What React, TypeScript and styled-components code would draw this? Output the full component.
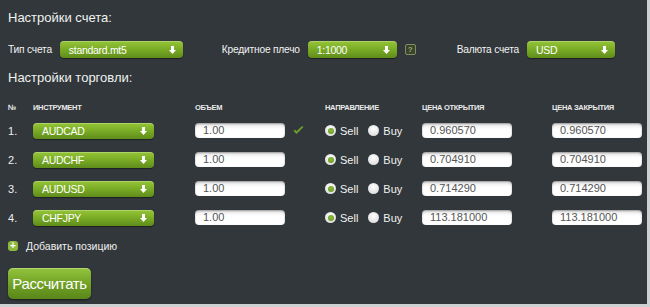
import React from "react";
import styled, { createGlobalStyle } from "styled-components";

const GlobalStyle = createGlobalStyle`
    html, body {
        margin: 0;
        padding: 0;
        background: #cdd1d1;
    }
    body {
        font-family: "Liberation Sans", Arial, sans-serif;
    }
`;

const Panel = styled.div`
    width: 647px;
    height: 304px;
    box-sizing: border-box;
    background: #31373a;
    padding: 10px 0 0 8px;
    color: #eef0ee;
    overflow: hidden;
`;

const Title = styled.h2`
    margin: 0;
    font-size: 13px;
    font-weight: normal;
    line-height: 16px;
    color: #f0f2f0;
`;

const AccountRow = styled.div`
    display: flex;
    align-items: center;
    margin: 15px 0 12px 0;
    height: 17px;
`;

interface IGroup {
    offset?: number;
}

const Group = styled.div<IGroup>`
    display: flex;
    align-items: center;
    margin-left: ${props => props.offset || 0}px;
`;

const Label = styled.span`
    font-size: 10.2px;
    color: #f2f2f2;
    margin-right: 8px;
    letter-spacing: -0.2px;
`;

interface ISelect {
    width: number;
    height?: number;
}

const Select = styled.div<ISelect>`
    width: ${props => props.width}px;
    height: ${props => props.height || 17}px;
    box-sizing: border-box;
    display: flex;
    align-items: center;
    justify-content: space-between;
    padding: 0 7px 0 9px;
    border-radius: 4px;
    background: linear-gradient(#94c537, #77a824 55%, #5f8c1b);
    box-shadow: inset 0 1px 0 rgba(255, 255, 255, 0.25), 0 1px 1px rgba(0, 0, 0, 0.4);
    color: #fff;
    font-size: 10.5px;
    letter-spacing: -0.3px;
`;

const HelpIcon = styled.span`
    width: 9px;
    height: 9px;
    margin-left: 8px;
    border: 1px solid #7f8f58;
    border-radius: 2px;
    background: #3a4232;
    color: #9db05e;
    font-size: 8px;
    line-height: 9px;
    text-align: center;
    font-weight: bold;
`;

const Grid = styled.div`
    display: grid;
    grid-template-columns: 25px 162px 130px 97px 130px 90px;
    align-items: center;
`;

const HeaderRow = styled(Grid)`
    margin-top: 16px;
    height: 10px;
    font-size: 7.5px;
    font-weight: bold;
    color: #eaeaea;
    letter-spacing: -0.3px;
    text-transform: uppercase;
`;

const Row = styled(Grid)`
    height: 29px;
`;

const Rows = styled.div`
    margin-top: 4px;
`;

const RowNum = styled.span`
    font-size: 11px;
    color: #f0f0f0;
`;

const VolumeCell = styled.div`
    display: flex;
    align-items: center;
    gap: 8px;
`;

const Input = styled.div`
    width: 90px;
    height: 15px;
    box-sizing: border-box;
    border-radius: 4px;
    background: linear-gradient(#e4e4e4, #fff 40%, #fff);
    box-shadow: inset 0 1px 2px rgba(0, 0, 0, 0.35);
    color: #555;
    font-size: 11px;
    line-height: 15px;
    padding-left: 8px;
`;

const Direction = styled.div`
    display: flex;
    align-items: center;
    font-size: 11px;
    color: #f2f2f2;
`;

interface IRadio {
    checked?: boolean;
}

const Radio = styled.span<IRadio>`
    width: 11px;
    height: 11px;
    border-radius: 50%;
    box-sizing: border-box;
    background: radial-gradient(circle at 50% 35%, #ffffff, #d4d4d4);
    margin-right: 4px;
    display: flex;
    align-items: center;
    justify-content: center;
    &::after {
        content: "";
        display: ${props => props.checked ? "block" : "none"};
        width: 6px;
        height: 6px;
        border-radius: 50%;
        background: radial-gradient(circle at 50% 40%, #8fc03c, #5d8c1c);
    }
`;

const RadioText = styled.span`
    margin-right: 10px;
`;

const AddLink = styled.div`
    display: flex;
    align-items: center;
    margin-top: 7px;
    font-size: 10.5px;
    color: #f0f0f0;
    height: 14px;
`;

const PlusIcon = styled.span`
    width: 10px;
    height: 10px;
    border-radius: 3px;
    background: #8db83d;
    color: #fff;
    font-size: 10px;
    line-height: 10px;
    font-weight: bold;
    text-align: center;
    margin-right: 8px;
`;

const CalcButton = styled.button`
    margin-top: 15px;
    width: 83px;
    height: 31px;
    border: 0;
    border-radius: 5px;
    padding: 0;
    background: linear-gradient(#93c43c, #6f9f25 55%, #5a871a);
    box-shadow: inset 0 1px 0 rgba(255, 255, 255, 0.3), 0 1px 2px rgba(0, 0, 0, 0.5);
    color: #fff;
    font-family: "Liberation Sans", Arial, sans-serif;
    font-size: 15px;
    letter-spacing: -0.4px;
`;

const Check = () => (
    <svg width="11" height="9" viewBox="0 0 11 9">
        <path d="M0.5 5 L3.5 8 L10.5 1 L9 0 L3.5 5.2 L2 3.5 Z" fill="#6e9c2c" />
    </svg>
);

const Arrow = () => (
    <svg width="7" height="8" viewBox="0 0 7 8">
        <path d="M2 0h3v4h2L3.5 8 0 4h2z" fill="#fff" />
    </svg>
);

const positions = [
    { symbol: "AUDCAD", price: "0.960570", ok: true },
    { symbol: "AUDCHF", price: "0.704910" },
    { symbol: "AUDUSD", price: "0.714290" },
    { symbol: "CHFJPY", price: "113.181000" },
];

export default function App() {
    return (
        <>
            <GlobalStyle />
            <Panel>
                <Title>Настройки счета:</Title>
                <AccountRow>
                    <Group>
                        <Label>Тип счета</Label>
                        <Select width={123}>standard.mt5<Arrow /></Select>
                    </Group>
                    <Group offset={39}>
                        <Label>Кредитное плечо</Label>
                        <Select width={89}>1:1000<Arrow /></Select>
                        <HelpIcon>?</HelpIcon>
                    </Group>
                    <Group offset={41}>
                        <Label>Валюта счета</Label>
                        <Select width={88}>USD<Arrow /></Select>
                    </Group>
                </AccountRow>
                <Title>Настройки торговли:</Title>
                <HeaderRow>
                    <span>№</span>
                    <span>Инструмент</span>
                    <span>Объем</span>
                    <span>Направление</span>
                    <span>Цена открытия</span>
                    <span>Цена закрытия</span>
                </HeaderRow>
                <Rows>
                    {positions.map((p, i) => (
                        <Row key={p.symbol}>
                            <RowNum>{i + 1}.</RowNum>
                            <Select width={121} height={16}>{p.symbol}<Arrow /></Select>
                            <VolumeCell>
                                <Input>1.00</Input>
                                {p.ok && <Check />}
                            </VolumeCell>
                            <Direction>
                                <Radio checked />
                                <RadioText>Sell</RadioText>
                                <Radio />
                                <RadioText>Buy</RadioText>
                            </Direction>
                            <Input>{p.price}</Input>
                            <Input>{p.price}</Input>
                        </Row>
                    ))}
                </Rows>
                <AddLink>
                    <PlusIcon>+</PlusIcon>
                    Добавить позицию
                </AddLink>
                <CalcButton>Рассчитать</CalcButton>
            </Panel>
        </>
    );
}
